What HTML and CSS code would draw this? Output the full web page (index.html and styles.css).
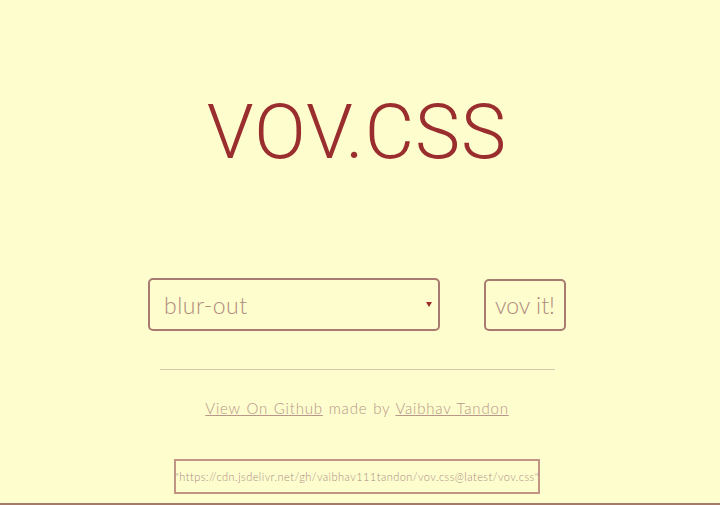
FILE: index.html
```html
<!DOCTYPE html>
<html>
<head>
<meta charset="utf-8">
<link rel="stylesheet" href="styles.css">
</head>
<body>
<div class="page">
  <h1 class="title">VOV.CSS</h1>
  <div class="controls">
    <div class="select">
      <span class="select-text">blur-out</span>
      <span class="caret"></span>
    </div>
    <button class="btn">vov it!</button>
  </div>
  <hr class="rule">
  <p class="credits"><a href="#">View On Github</a> made by <a href="#">Vaibhav Tandon</a></p>
  <div class="code">"https://cdn.jsdelivr.net/gh/vaibhav111tandon/vov.css@latest/vov.css"</div>
</div>
<div class="bottom-line"></div>
</body>
</html>
```

FILE: styles.css
```css
html, body {
  margin: 0;
  padding: 0;
  background: #fdfdcd;
  height: 505px;
  overflow: hidden;
}
.page {
  width: 714px;
  height: 503px;
  display: flex;
  flex-direction: column;
  align-items: center;
  font-family: "Lato", sans-serif;
}
.title {
  margin: 84px 0 0 0;
  font-family: "Roboto", sans-serif;
  font-weight: 300;
  font-size: 76px;
  line-height: 96px;
  color: #9a2e2e;
  letter-spacing: 1px;
}
.controls {
  margin-top: 98px;
  display: flex;
  gap: 44px;
  align-items: center;
}
.select {
  box-sizing: border-box;
  width: 292px;
  height: 53px;
  border: 2px solid #a97a70;
  border-radius: 5px;
  display: flex;
  align-items: center;
  justify-content: space-between;
  padding: 0 6px 0 14px;
}
.select-text {
  font-size: 23px;
  font-weight: 300;
  color: #b08a7e;
  letter-spacing: 0.5px;
}
.caret {
  width: 0;
  height: 0;
  border-left: 3px solid transparent;
  border-right: 3px solid transparent;
  border-top: 5px solid #9a2c2c;
}
.btn {
  box-sizing: border-box;
  width: 82px;
  height: 52px;
  border: 2px solid #a97a70;
  border-radius: 5px;
  background: transparent;
  font-family: "Lato", sans-serif;
  font-size: 23px;
  font-weight: 300;
  color: #b08a7e;
  padding: 0;
}
.rule {
  width: 395px;
  margin: 38px 0 0 0;
  border: 0;
  border-top: 1px solid #d6c8b0;
  height: 0;
}
.credits {
  margin: 28px 0 0 0;
  font-size: 15px;
  font-weight: 300;
  color: #b8968a;
  letter-spacing: 0.8px;
  word-spacing: 1px;
  line-height: 20px;
}
.credits a {
  color: #b8968a;
  text-decoration: underline;
}
.code {
  margin-top: 41px;
  box-sizing: border-box;
  width: 366px;
  height: 35px;
  border: 2px solid #c29484;
  display: flex;
  align-items: center;
  justify-content: center;
  font-size: 11px;
  font-weight: 300;
  letter-spacing: 0.45px;
  color: #ab8c84;
  white-space: nowrap;
}
.bottom-line {
  height: 2px;
  background: #a57a6a;
  width: 100%;
}
```
